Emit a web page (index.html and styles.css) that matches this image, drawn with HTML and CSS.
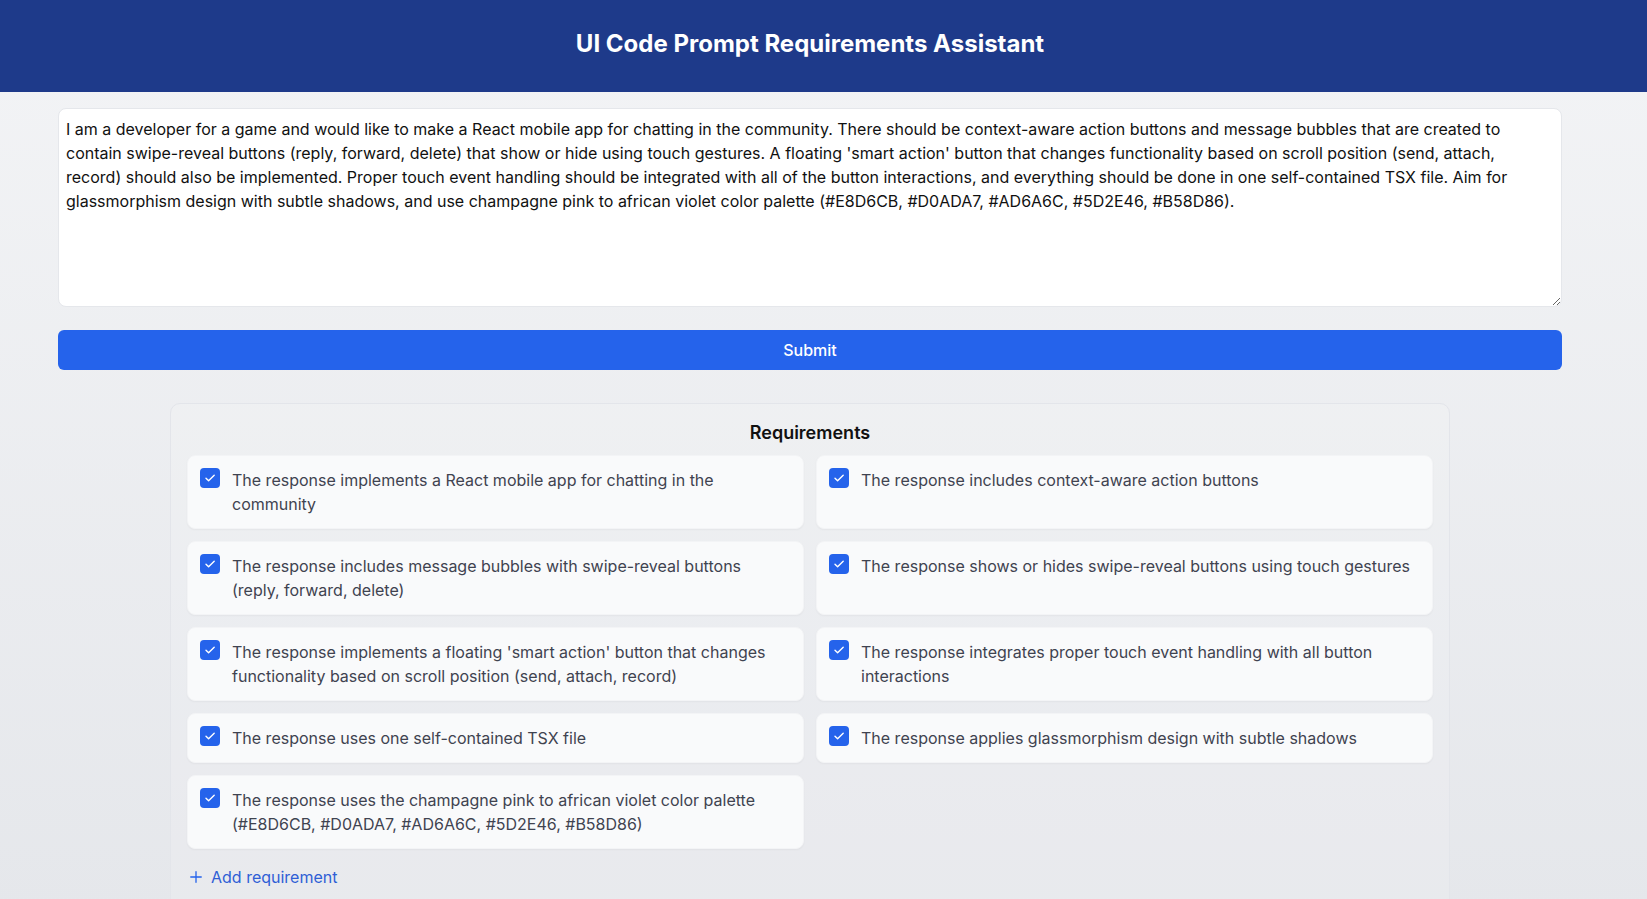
FILE: index.html
```html
<!DOCTYPE html>
<html lang="en">
<head>
<meta charset="utf-8">
<title>UI Code Prompt Requirements Assistant</title>
<link rel="stylesheet" href="styles.css">
</head>
<body>
<header class="topbar">
  <h1 class="title">UI Code Prompt Requirements Assistant</h1>
</header>
<main class="main">
  <textarea class="prompt" rows="8">I am a developer for a game and would like to make a React mobile app for chatting in the community. There should be context-aware action buttons and message bubbles that are created to contain swipe-reveal buttons (reply, forward, delete) that show or hide using touch gestures. A floating 'smart action' button that changes functionality based on scroll position (send, attach, record) should also be implemented. Proper touch event handling should be integrated with all of the button interactions, and everything should be done in one self-contained TSX file. Aim for glassmorphism design with subtle shadows, and use champagne pink to african violet color palette (#E8D6CB, #D0ADA7, #AD6A6C, #5D2E46, #B58D86).</textarea>
  <button class="submit" type="button">Submit</button>

  <section class="reqs">
    <h2 class="reqs-title">Requirements</h2>
    <div class="req-grid">
      <div class="req"><span class="check"><svg viewBox="0 0 20 20" width="20" height="20"><path d="M6 10.2l2.6 2.6L14.2 7.2" fill="none" stroke="#fff" stroke-width="1.4" stroke-linecap="round" stroke-linejoin="round"/></svg></span><span class="req-text">The response implements a React mobile app for chatting in the community</span></div>
      <div class="req"><span class="check"><svg viewBox="0 0 20 20" width="20" height="20"><path d="M6 10.2l2.6 2.6L14.2 7.2" fill="none" stroke="#fff" stroke-width="1.4" stroke-linecap="round" stroke-linejoin="round"/></svg></span><span class="req-text">The response includes context-aware action buttons</span></div>
      <div class="req"><span class="check"><svg viewBox="0 0 20 20" width="20" height="20"><path d="M6 10.2l2.6 2.6L14.2 7.2" fill="none" stroke="#fff" stroke-width="1.4" stroke-linecap="round" stroke-linejoin="round"/></svg></span><span class="req-text">The response includes message bubbles with swipe-reveal buttons (reply, forward, delete)</span></div>
      <div class="req"><span class="check"><svg viewBox="0 0 20 20" width="20" height="20"><path d="M6 10.2l2.6 2.6L14.2 7.2" fill="none" stroke="#fff" stroke-width="1.4" stroke-linecap="round" stroke-linejoin="round"/></svg></span><span class="req-text">The response shows or hides swipe-reveal buttons using touch gestures</span></div>
      <div class="req"><span class="check"><svg viewBox="0 0 20 20" width="20" height="20"><path d="M6 10.2l2.6 2.6L14.2 7.2" fill="none" stroke="#fff" stroke-width="1.4" stroke-linecap="round" stroke-linejoin="round"/></svg></span><span class="req-text">The response implements a floating 'smart action' button that changes functionality based on scroll position (send, attach, record)</span></div>
      <div class="req"><span class="check"><svg viewBox="0 0 20 20" width="20" height="20"><path d="M6 10.2l2.6 2.6L14.2 7.2" fill="none" stroke="#fff" stroke-width="1.4" stroke-linecap="round" stroke-linejoin="round"/></svg></span><span class="req-text">The response integrates proper touch event handling with all button interactions</span></div>
      <div class="req"><span class="check"><svg viewBox="0 0 20 20" width="20" height="20"><path d="M6 10.2l2.6 2.6L14.2 7.2" fill="none" stroke="#fff" stroke-width="1.4" stroke-linecap="round" stroke-linejoin="round"/></svg></span><span class="req-text">The response uses one self-contained TSX file</span></div>
      <div class="req"><span class="check"><svg viewBox="0 0 20 20" width="20" height="20"><path d="M6 10.2l2.6 2.6L14.2 7.2" fill="none" stroke="#fff" stroke-width="1.4" stroke-linecap="round" stroke-linejoin="round"/></svg></span><span class="req-text">The response applies glassmorphism design with subtle shadows</span></div>
      <div class="req"><span class="check"><svg viewBox="0 0 20 20" width="20" height="20"><path d="M6 10.2l2.6 2.6L14.2 7.2" fill="none" stroke="#fff" stroke-width="1.4" stroke-linecap="round" stroke-linejoin="round"/></svg></span><span class="req-text">The response uses the champagne pink to african violet color palette (#E8D6CB, #D0ADA7, #AD6A6C, #5D2E46, #B58D86)</span></div>
    </div>
    <button class="add" type="button"><svg viewBox="0 0 16 16" width="14" height="14"><path d="M8 2v12M2 8h12" stroke="#2563eb" stroke-width="1.5" stroke-linecap="round"/></svg><span>Add requirement</span></button>
  </section>
</main>
</body>
</html>
```

FILE: styles.css
```css
* { box-sizing: border-box; }

html, body {
  margin: 0;
  padding: 0;
}

body {
  font-family: Inter, "Noto Sans", "Liberation Sans", sans-serif;
  background: linear-gradient(180deg, #f3f4f6 0%, #e5e7eb 100%);
  min-height: 100vh;
  color: #111827;
}

.topbar {
  background: #1e3a8a;
  height: 92px;
  padding: 28px 27px 0 0;
}

.title {
  margin: 0;
  text-align: center;
  color: #fff;
  font-size: 24px;
  line-height: 32px;
  font-weight: 700;
}

.main {
  width: 1620px;
  padding: 16px 58px 0 58px;
}

.prompt {
  display: block;
  width: 100%;
  height: 199px;
  margin: 0;
  padding: 8px 7px;
  border: 1px solid #e5e7eb;
  border-radius: 8px;
  background: #fff;
  font-family: Inter, "Noto Sans", "Liberation Sans", sans-serif;
  font-size: 16px;
  line-height: 24px;
  color: #111;
  resize: vertical;
  outline: none;
}

.submit {
  display: block;
  width: 100%;
  height: 40px;
  margin-top: 23px;
  border: 0;
  border-radius: 6px;
  background: #2563eb;
  color: #fff;
  font-family: Inter, "Noto Sans", "Liberation Sans", sans-serif;
  font-size: 16px;
  font-weight: 500;
}

.reqs {
  width: 1280px;
  margin: 33px auto 0;
  padding: 15px 16px 20px;
  border: 1px solid #e3e5ea;
  border-radius: 10px;
  background: rgba(255, 255, 255, 0.12);
}

.reqs-title {
  margin: 0 0 8px;
  text-align: center;
  font-size: 18px;
  line-height: 28px;
  font-weight: 600;
  color: #111;
}

.req-grid {
  display: grid;
  grid-template-columns: 1fr 1fr;
  column-gap: 12px;
  row-gap: 12px;
  align-items: stretch;
}

.req {
  display: flex;
  align-items: flex-start;
  gap: 12px;
  padding: 12px;
  background: #f9fafb;
  border: 1px solid #f3f4f6;
  border-radius: 8px;
  box-shadow: 0 1px 2px rgba(0, 0, 0, 0.04);
}

.check {
  flex: none;
  width: 20px;
  height: 20px;
  margin-top: 0;
  border-radius: 4px;
  background: #2563eb;
  display: flex;
}

.req-text {
  font-size: 16px;
  line-height: 24px;
  color: #3f4350;
}

.add {
  display: flex;
  align-items: center;
  gap: 8px;
  margin-top: 16px;
  padding: 0 0 0 2px;
  border: 0;
  background: none;
  color: #2f5fd6;
  font-family: Inter, "Noto Sans", "Liberation Sans", sans-serif;
  font-size: 16px;
  line-height: 24px;
}
```
